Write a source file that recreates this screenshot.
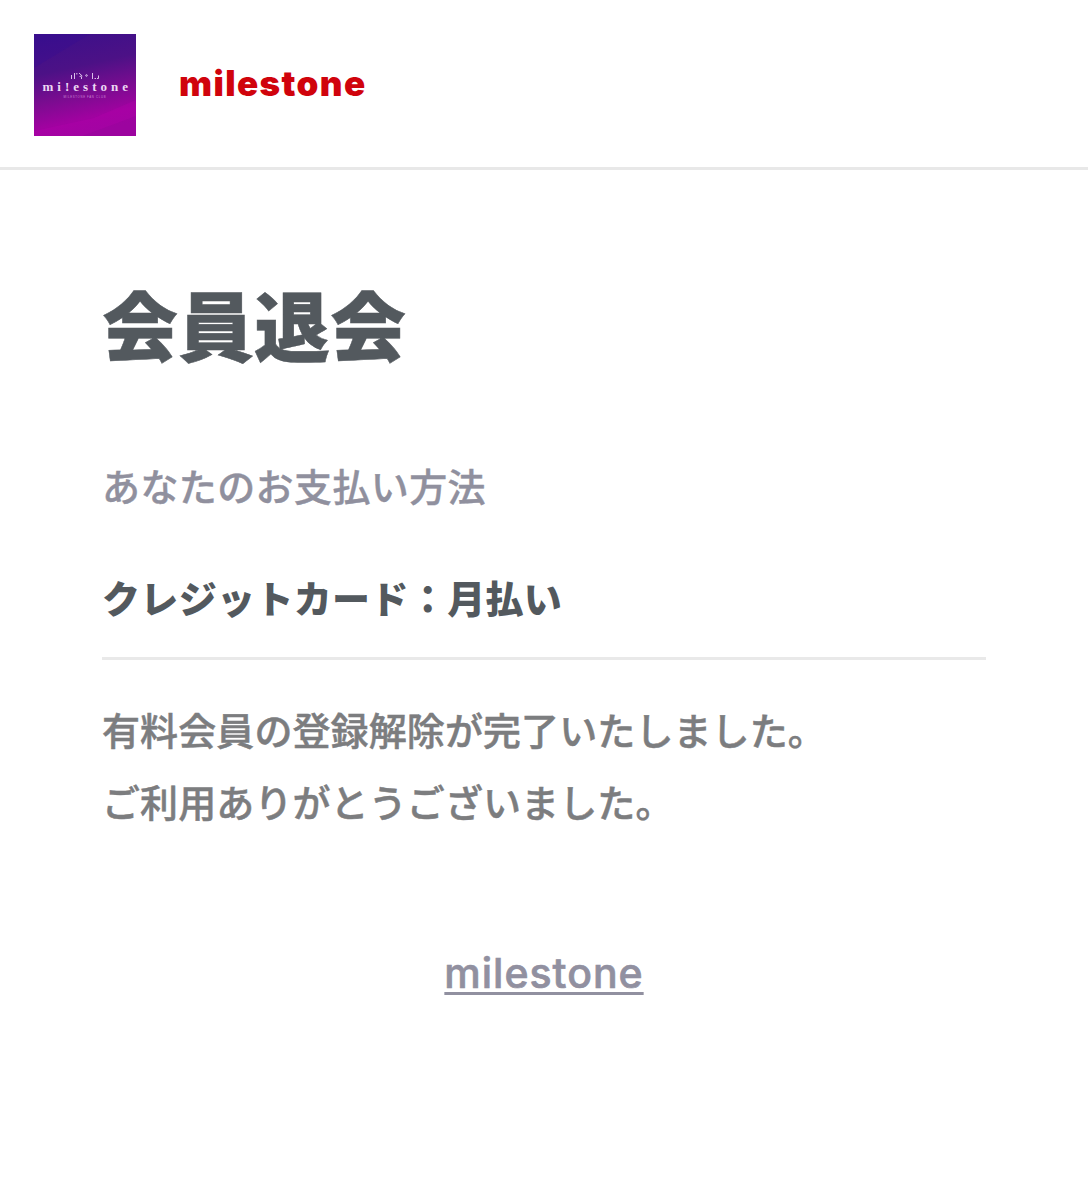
<template>
  <main class="page">
    <header class="header">
      <svg class="logo" viewBox="0 0 102 102" aria-hidden="true">
        <defs>
          <linearGradient id="bg" x1="0.2" y1="0" x2="0.42" y2="1">
            <stop offset="0" stop-color="#3c108a" />
            <stop offset="0.35" stop-color="#4c1186" />
            <stop offset="0.62" stop-color="#7a0c90" />
            <stop offset="0.85" stop-color="#a002a0" />
            <stop offset="1" stop-color="#9c049f" />
          </linearGradient>
        </defs>
        <rect width="102" height="102" fill="url(#bg)" />
        <path d="M0 34 56 0H0Z" fill="#2c0c9c" opacity=".2" />
        <path d="M0 97 60 84 102 66V82L48 102H0Z" fill="#c400b4" opacity=".2" />
        <g class="ornament">
          <path d="M37.5 41v4M40.5 39v6M42 39.8h1.5M58.5 39v6M60.5 44.5h1.5M64.5 41.5v3h-1.5" />
          <path d="m45 39 3.2 3-2.6.4M47.5 43v2" />
          <circle cx="52.5" cy="41.5" r=".8" />
        </g>
        <text x="8.5" y="57" class="logo-name" textLength="85.5">mi!estone</text>
        <text x="29.5" y="64" class="logo-tagline" textLength="42">MILESTONE FAN CLUB</text>
      </svg>
      <span class="brand">milestone</span>
    </header>
    <section class="content">
      <h1>会員退会</h1>
      <p class="label">あなたのお支払い方法</p>
      <p class="method">クレジットカード：月払い</p>
      <p class="message">有料会員の登録解除が完了いたしました。<br />ご利用ありがとうございました。</p>
    </section>
    <footer class="footer"><a href="#">milestone</a></footer>
  </main>
</template>

<style>
body { background: #fff; }
</style>
<style scoped>
.page { height: 1200px; overflow: hidden; background: #fff; font-family: Inter, "Noto Sans CJK JP", sans-serif; }
.header { box-sizing: border-box; height: 170px; padding: 34px 34px 0; border-bottom: 3px solid #e8e8e8; display: flex; align-items: flex-start; }
.logo { width: 102px; height: 102px; display: block; }
.logo-name { font: 700 13px "Liberation Serif", serif; fill: #ecd9f4; }
.logo-tagline { font: 2.8px "Liberation Sans", sans-serif; fill: #c984d4; }
.ornament { fill: none; stroke: #d9bfe9; stroke-width: 1; }
.brand { margin-left: 43px; line-height: 98px; font-size: 35px; font-weight: 900; color: #d0030c; letter-spacing: 1.4px; }
.content { padding: 101px 102px 0; }
h1 { margin: 0; font-size: 76px; line-height: 114px; font-weight: 900; color: #53595e; -webkit-text-stroke: .5px #53595e; }
p { margin: 0; font-size: 38px; white-space: nowrap; }
.label { margin-top: 73px; line-height: 58px; color: #90909e; font-weight: 500; letter-spacing: .4px; -webkit-text-stroke: .4px #90909e; }
.method { margin-top: 54px; line-height: 58px; padding-bottom: 29px; border-bottom: 3px solid #e9e9e9; color: #53595e; font-weight: 900; letter-spacing: .35px; }
.message { margin-top: 35px; line-height: 72px; color: #7c7d7f; font-weight: 500; letter-spacing: .1px; -webkit-text-stroke: .5px #7c7d7f; }
.footer { margin-top: 98px; text-align: center; line-height: 72px; }
.footer a { color: #9190a0; font-size: 41px; font-weight: 500; letter-spacing: 1px; text-decoration-thickness: 3px; text-underline-offset: 4px; -webkit-text-stroke: .7px #9190a0; }
</style>
